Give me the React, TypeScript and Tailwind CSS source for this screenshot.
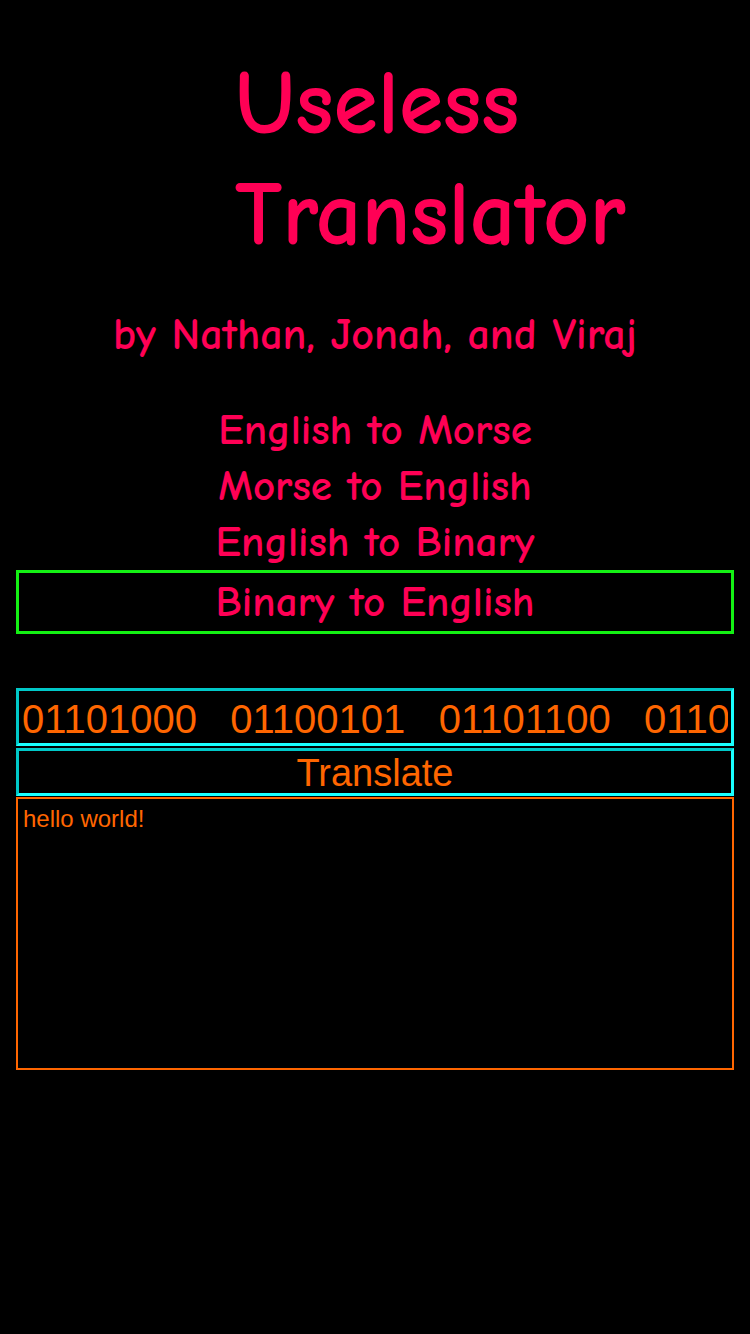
import React from "react";

const comic = { fontFamily: '"Comic Sans MS", "Comic Neue", Lato, "Noto Sans", sans-serif' };
const arial = { fontFamily: '"Liberation Sans", Arial, Helvetica, sans-serif' };

export default function App() {
  const items = ["English to Morse", "Morse to English", "English to Binary"];
  return (
    <div className="min-h-screen bg-black pb-[260px]" style={comic}>
      <h1 className="pl-[235px] pt-[49px] text-[90px] font-bold leading-[111px] text-[#ff0055]">
        <span className="block">Useless</span>
        <span className="block">Translator</span>
      </h1>
      <p className="mt-[36px] text-center text-[44px] font-bold leading-[56px] text-[#ff0055]">
        by Nathan, Jonah, and Viraj
      </p>
      <div className="mt-[39px] flex flex-col text-[43px] font-bold text-[#ff0055]">
        {items.map((t) => (
          <div key={t} className="flex h-[56px] items-center justify-center">
            {t}
          </div>
        ))}
        <div className="mx-4 flex h-[64px] items-center justify-center border-[3px] border-[#14f014]">
          Binary to English
        </div>
      </div>
      <div className="mx-4 mt-[54px] flex flex-col" style={arial}>
        <input
          readOnly
          value="01101000   01100101   01101100   01101100   01101111"
          className="h-[58px] w-full border-[3px] border-b-[#19ffff] border-l-[#00c8c8] border-r-[#19ffff] border-t-[#00c8c8] bg-black px-[3px] pt-[4px] text-[40px] text-[#ff6600] outline-none"
        />
        <button className="mt-[2px] h-[48px] w-full border-[3px] border-b-[#19ffff] border-l-[#00c8c8] border-r-[#19ffff] border-t-[#00c8c8] bg-black pt-[2px] text-[38px] leading-none text-[#ff6600]">
          Translate
        </button>
        <textarea
          readOnly
          value="hello world!"
          className="mt-[1px] h-[273px] w-full resize-none border-2 border-[#ff6600] bg-black px-[5px] pt-[7px] text-[24px] leading-[25px] text-[#ff6600] outline-none"
        />
      </div>
    </div>
  );
}
